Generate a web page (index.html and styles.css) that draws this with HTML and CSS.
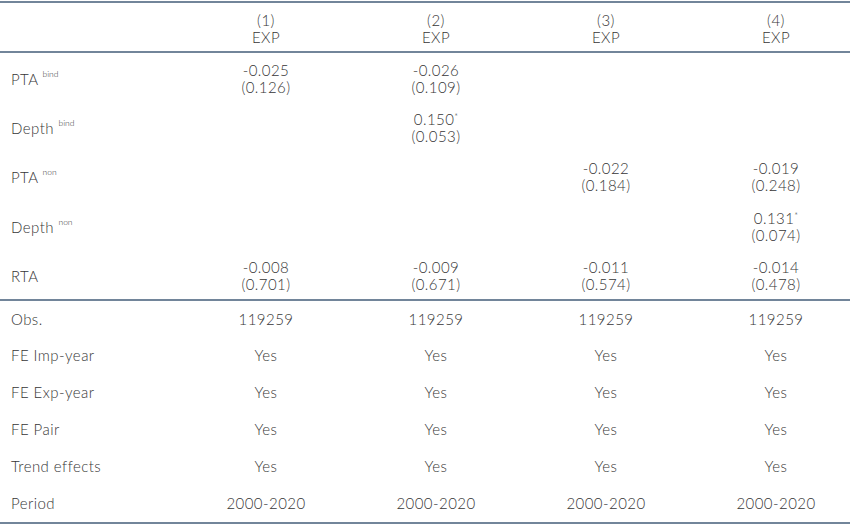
FILE: index.html
```html
<!DOCTYPE html>
<html>
<head>
<meta charset="utf-8">
<link rel="stylesheet" href="styles.css">
</head>
<body>
<table class="reg">
  <thead>
    <tr class="head">
      <th class="label"></th>
      <th>(1)<br>EXP</th>
      <th>(2)<br>EXP</th>
      <th>(3)<br>EXP</th>
      <th>(4)<br>EXP</th>
    </tr>
  </thead>
  <tbody class="coef">
    <tr>
      <td class="label">PTA <sup>bind</sup></td>
      <td>-0.025<br>(0.126)</td>
      <td>-0.026<br>(0.109)</td>
      <td></td>
      <td></td>
    </tr>
    <tr>
      <td class="label">Depth <sup>bind</sup></td>
      <td></td>
      <td>0.150<sup class="star">*</sup><br>(0.053)</td>
      <td></td>
      <td></td>
    </tr>
    <tr>
      <td class="label">PTA <sup>non</sup></td>
      <td></td>
      <td></td>
      <td>-0.022<br>(0.184)</td>
      <td>-0.019<br>(0.248)</td>
    </tr>
    <tr>
      <td class="label">Depth <sup>non</sup></td>
      <td></td>
      <td></td>
      <td></td>
      <td>0.131<sup class="star">*</sup><br>(0.074)</td>
    </tr>
    <tr>
      <td class="label">RTA</td>
      <td>-0.008<br>(0.701)</td>
      <td>-0.009<br>(0.671)</td>
      <td>-0.011<br>(0.574)</td>
      <td>-0.014<br>(0.478)</td>
    </tr>
  </tbody>
  <tbody class="stats">
    <tr>
      <td class="label">Obs.</td>
      <td>119259</td><td>119259</td><td>119259</td><td>119259</td>
    </tr>
    <tr>
      <td class="label">FE Imp-year</td>
      <td>Yes</td><td>Yes</td><td>Yes</td><td>Yes</td>
    </tr>
    <tr>
      <td class="label">FE Exp-year</td>
      <td>Yes</td><td>Yes</td><td>Yes</td><td>Yes</td>
    </tr>
    <tr>
      <td class="label">FE Pair</td>
      <td>Yes</td><td>Yes</td><td>Yes</td><td>Yes</td>
    </tr>
    <tr>
      <td class="label">Trend effects</td>
      <td>Yes</td><td>Yes</td><td>Yes</td><td>Yes</td>
    </tr>
    <tr>
      <td class="label">Period</td>
      <td>2000-2020</td><td>2000-2020</td><td>2000-2020</td><td>2000-2020</td>
    </tr>
  </tbody>
</table>
</body>
</html>
```
FILE: styles.css
```css
html, body {
  margin: 0;
  padding: 0;
  background: #ffffff;
}
body {
  padding-top: 1px;
  font-family: "Lato", "Open Sans", sans-serif;
  font-size: 15px;
  font-weight: 300;
  letter-spacing: 0.45px;
  color: #363636;
}
.reg {
  width: 850px;
  border-collapse: collapse;
  table-layout: fixed;
  border-top: 2px solid #72859a;
  border-bottom: 2px solid #72859a;
}
.reg th, .reg td {
  width: 170px;
  padding: 0;
  text-align: center;
  vertical-align: middle;
  font-weight: 300;
  line-height: 17px;
}
.reg .label {
  text-align: left;
  padding-left: 11px;
}
.head th {
  height: 45px;
  padding-top: 3px;
  border-bottom: 2px solid #72859a;
}
.coef tr {
  height: 49.6px;
}
.coef td {
  padding-top: 3px;
}
.coef tr:last-child td {
  border-bottom: 2px solid #72859a;
}
.stats tr {
  height: 37.1px;
}
.coef .label {
  padding-top: 4px;
}
sup {
  font-size: 8.5px;
  letter-spacing: 0;
  line-height: 0;
  vertical-align: 8px;
}
sup.star {
  font-size: 9px;
  vertical-align: 5px;
}
```
